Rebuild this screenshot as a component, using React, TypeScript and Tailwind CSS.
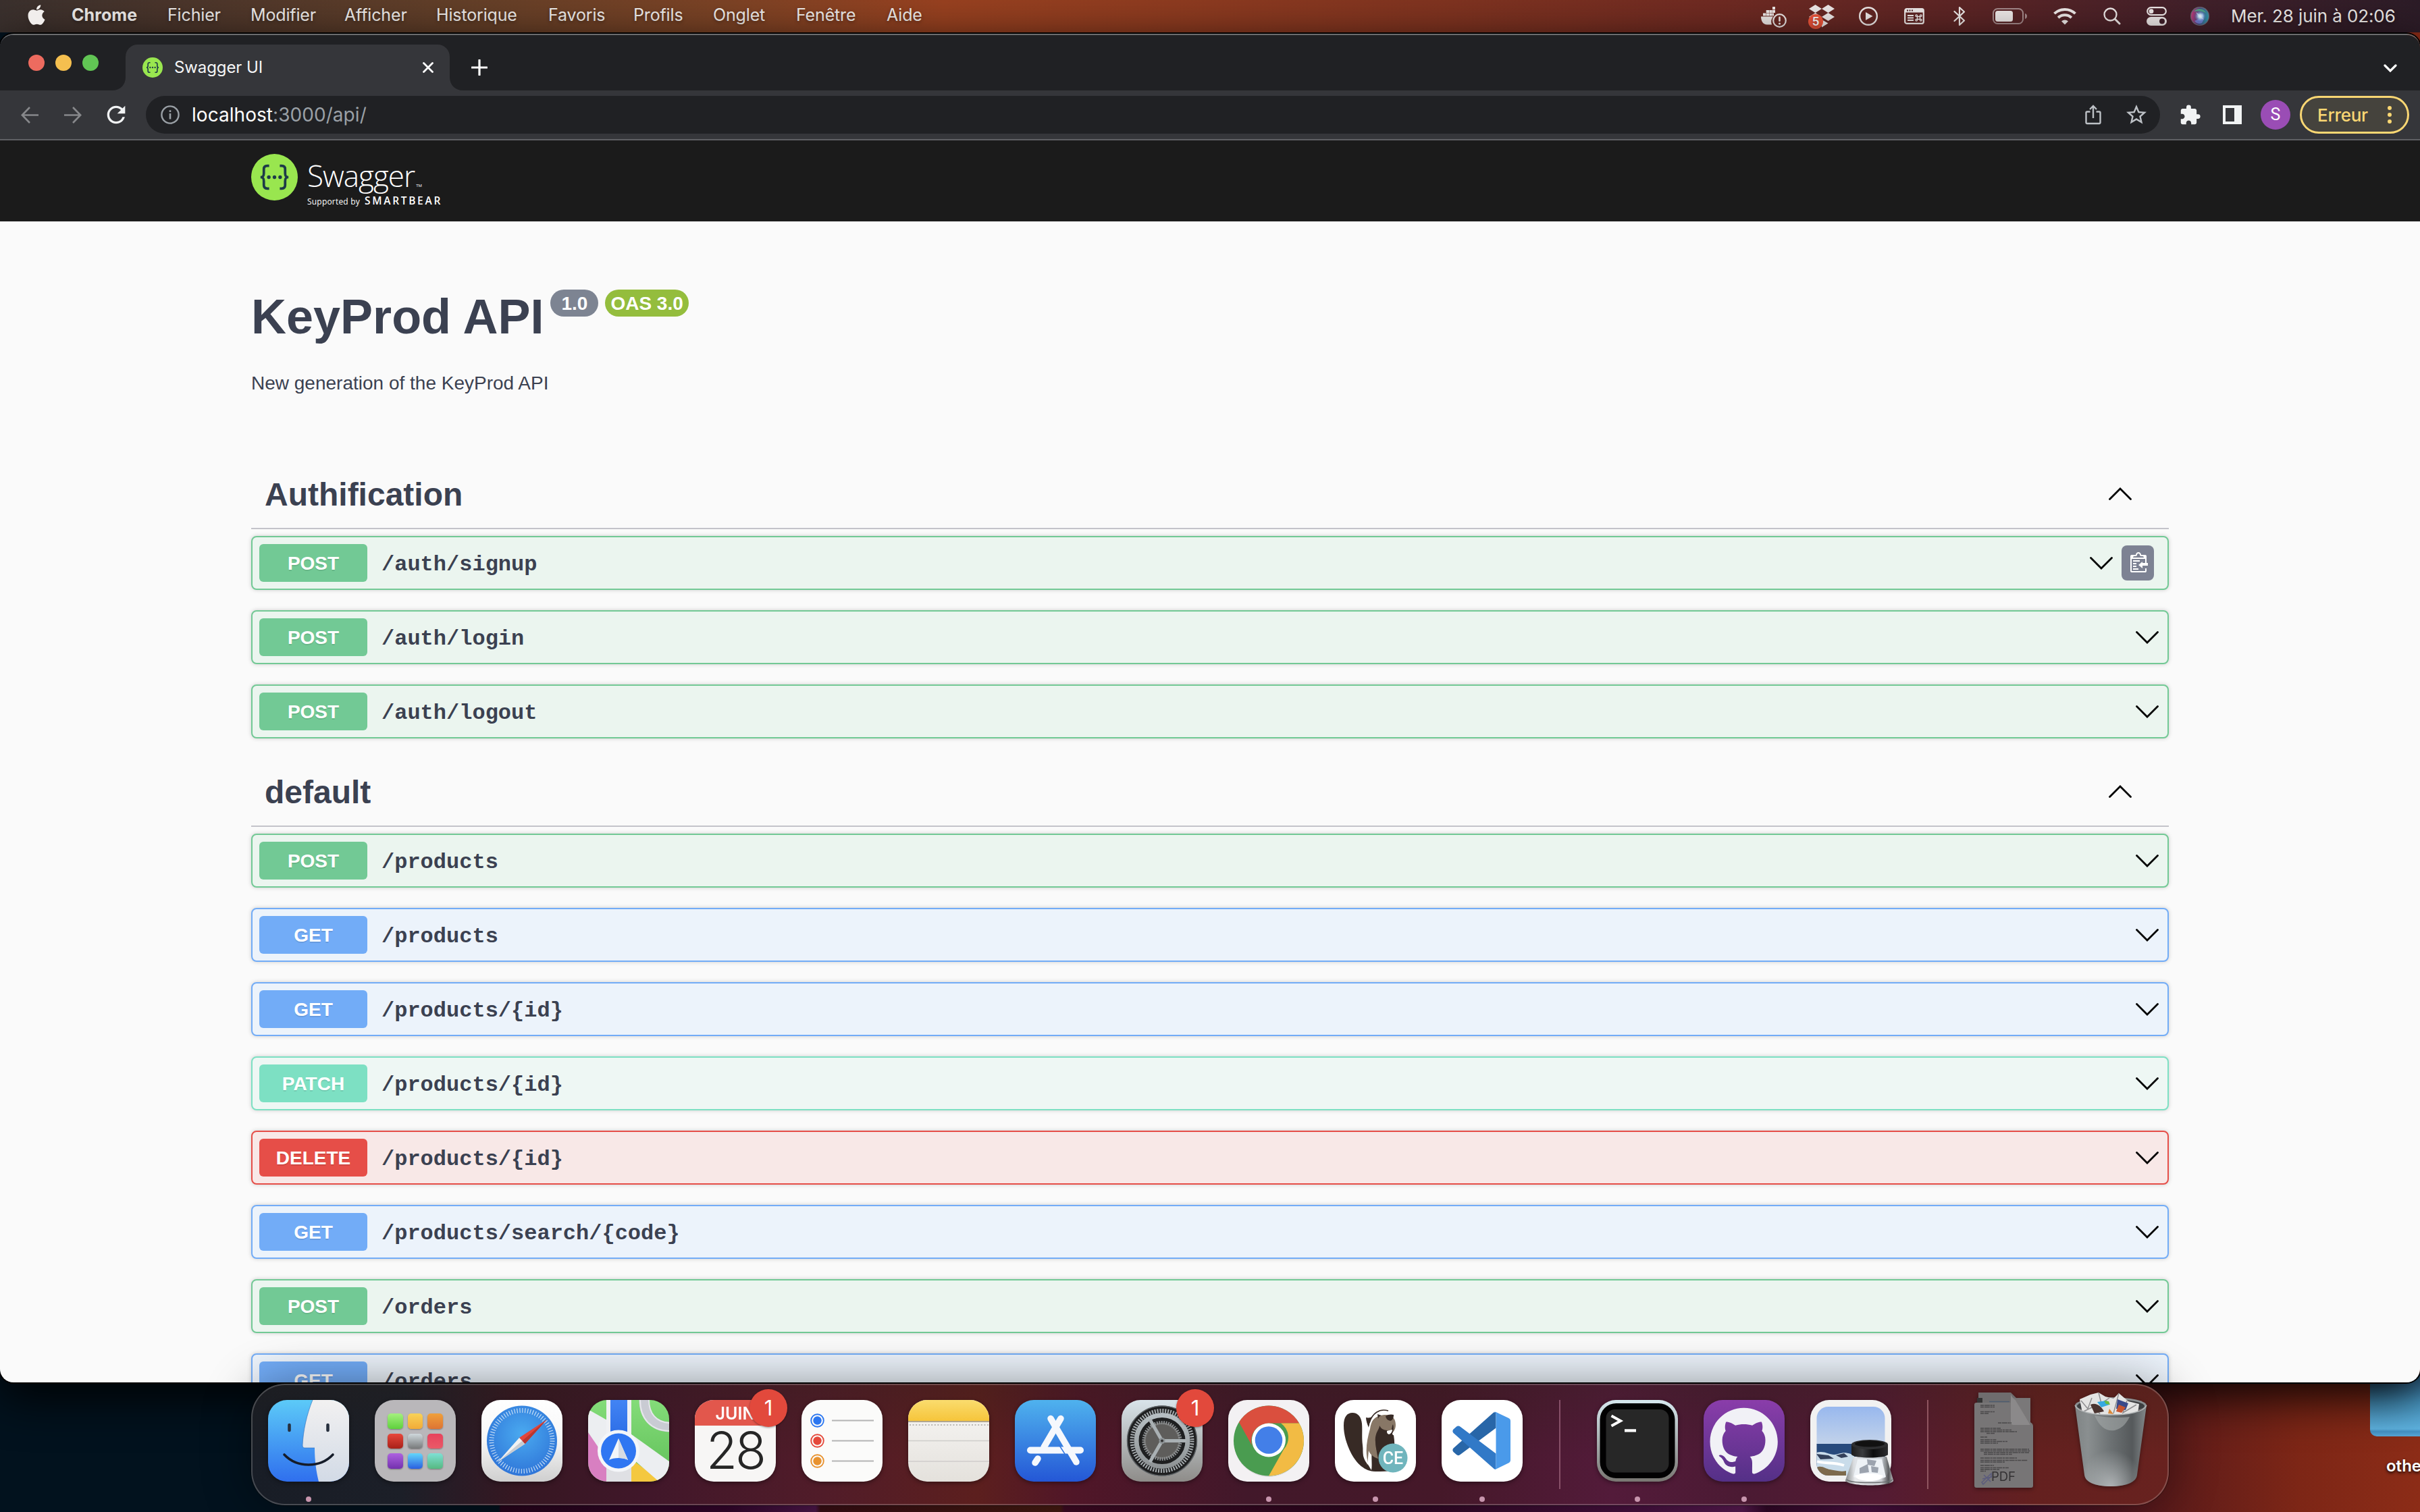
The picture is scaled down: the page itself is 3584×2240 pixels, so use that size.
import React from "react";
import { FaApple } from "react-icons/fa";
import { MdExtension, MdStarBorder, MdRefresh } from "react-icons/md";

/* ---------- menu bar ---------- */

const menus = [
  { label: "Chrome", cls: "w-[142px] font-bold tracking-[0.1px]" },
  { label: "Fichier", cls: "w-[123px]" },
  { label: "Modifier", cls: "w-[139px]" },
  { label: "Afficher", cls: "w-[136px]" },
  { label: "Historique", cls: "w-[166px]" },
  { label: "Favoris", cls: "w-[126px]" },
  { label: "Profils", cls: "w-[118px]" },
  { label: "Onglet", cls: "w-[123px]" },
  { label: "Fenêtre", cls: "w-[134px]" },
  { label: "Aide", cls: "w-[70px]" },
];

function DockerIcon() {
  return (
    <svg className="w-[40px] h-[34px]" viewBox="0 0 40 34" fill="#eee9e8">
      <path d="M1 15.500h18a12 12 0 0 0-2 12H10C4 27.500 1 22 1 15.500z" />
      <path d="M4 10.500h4.300v4H4zM8.700 10.500H13v4H8.700zM13.400 10.500h4.300v4h-4.300zM8.700 6H13v4H8.700zM13.400 6h4.300v4h-4.300zM18 6h4v4h-4zM18 1h4v4.300h-4zM18 10.500h2v4h-2z" />
      <circle cx="28.500" cy="21.500" r="9.300" fill="none" stroke="#eee9e8" strokeWidth="2.200" />
      <rect x="27.200" y="15.500" width="2.600" height="7.500" rx="1.200" />
      <circle cx="28.500" cy="26" r="1.600" />
    </svg>
  );
}

function DropboxIcon() {
  return (
    <svg className="w-[40px] h-[38px]" viewBox="0 0 40 38">
      <g fill="#eee9e8">
        <path d="M10.500 0l9.500 6-9.500 6L1 6zM29.500 0l9.500 6-9.500 6L20 6zM10.500 12l9.500 6-9.500 6L1 18zM29.500 12l9.500 6-9.500 6L20 18zM20 22l9.500 5.500L20 33.500z" />
      </g>
      <circle cx="11" cy="25" r="11" fill="#f0553a" />
      <text x="11" y="31" textAnchor="middle" fontFamily="Inter, sans-serif" fontSize="17" fontWeight="600" fill="#fff">5</text>
    </svg>
  );
}

function PlayIcon() {
  return (
    <svg className="w-[28px] h-[28px]" viewBox="0 0 28 28">
      <circle cx="14" cy="14" r="12.800" fill="none" stroke="#eee9e8" strokeWidth="2.400" />
      <path d="M10 8l10.500 6L10 20z" fill="#eee9e8" />
    </svg>
  );
}

function ShortcutIcon() {
  return (
    <svg className="w-[30px] h-[24px]" viewBox="0 0 30 24">
      <rect x="1.200" y="1.200" width="27.600" height="21.600" rx="2.500" fill="none" stroke="#eee9e8" strokeWidth="2.200" />
      <path d="M1 1h28v5.500H1z" fill="#eee9e8" />
      <path d="M4 3.500h2M7.500 3.500h2M11 3.500h2" stroke="#54272a" strokeWidth="1.800" />
      <path d="M5 11h9M5 14.500h9M5 18h9" stroke="#eee9e8" strokeWidth="1.800" />
      <path d="M19.500 12.500h4v4h-4zM19.500 12.500v-1.300a1.300 1.300 0 1 0-1.300 1.300zM23.500 12.500v-1.300a1.300 1.300 0 1 1 1.300 1.300zM19.500 16.500v1.300a1.300 1.300 0 1 1-1.300-1.300zM23.500 16.500v1.300a1.300 1.300 0 1 0 1.300-1.300z" fill="none" stroke="#eee9e8" strokeWidth="1.300" />
    </svg>
  );
}

function BluetoothIcon() {
  return (
    <svg className="w-[18px] h-[30px]" viewBox="0 0 18 30" fill="none" stroke="#eee9e8" strokeWidth="2.200" strokeLinejoin="round" strokeLinecap="round">
      <path d="M1.500 8L16 21.500 9 28V2l7 6.500L1.500 22" />
    </svg>
  );
}

function BatteryIcon() {
  return (
    <svg className="w-[52px] h-[24px]" viewBox="0 0 52 24">
      <rect x="1" y="1" width="44" height="22" rx="6.500" fill="none" stroke="#a58a8b" strokeWidth="2" />
      <rect x="4" y="4" width="26" height="16" rx="3.500" fill="#eee9e8" />
      <path d="M48 8c2 .6 3 2 3 4s-1 3.400-3 4z" fill="#a58a8b" />
    </svg>
  );
}

function WifiIcon() {
  return (
    <svg className="w-[36px] h-[26px]" viewBox="0 0 36 26" fill="none" stroke="#eee9e8">
      <path d="M2.500 9.200C11 .8 25 .8 33.500 9.200" strokeWidth="4" />
      <path d="M8.200 15.200c5.500-5.200 14-5.200 19.600 0" strokeWidth="4" />
      <path d="M13 20.500c3-2.700 7-2.700 10 0l-5 5z" fill="#eee9e8" stroke="none" />
    </svg>
  );
}

function SearchIcon() {
  return (
    <svg className="w-[26px] h-[26px]" viewBox="0 0 26 26" fill="none" stroke="#eee9e8" strokeLinecap="round">
      <circle cx="10.500" cy="10.500" r="9" strokeWidth="2.300" />
      <path d="M17.300 17.300L24 24" strokeWidth="3" />
    </svg>
  );
}

function ControlIcon() {
  return (
    <svg className="w-[30px] h-[28px]" viewBox="0 0 30 28">
      <rect x="1.200" y="1.200" width="27.600" height="11" rx="5.500" fill="none" stroke="#eee9e8" strokeWidth="2.200" />
      <circle cx="7" cy="6.700" r="3.400" fill="#eee9e8" />
      <rect x="0" y="15" width="30" height="13" rx="6.500" fill="#eee9e8" />
      <circle cx="23" cy="21.500" r="4" fill="#40202a" />
    </svg>
  );
}

function SiriIcon() {
  return (
    <svg className="w-[28px] h-[28px]" viewBox="0 0 28 28">
      <defs>
        <radialGradient id="siriCore">
          <stop offset="0" stopColor="#fff" />
          <stop offset=".35" stopColor="#c8ecff" stopOpacity=".9" />
          <stop offset="1" stopColor="#6a8fe0" stopOpacity="0" />
        </radialGradient>
        <linearGradient id="siriRim" x1="0" y1=".5" x2="1" y2=".6">
          <stop offset="0" stopColor="#c43a78" />
          <stop offset=".45" stopColor="#46467a" />
          <stop offset="1" stopColor="#2f9cae" />
        </linearGradient>
      </defs>
      <circle cx="14" cy="14" r="14" fill="#6e6a7a" />
      <circle cx="14" cy="14" r="12.800" fill="url(#siriRim)" />
      <path d="M5 7c6-6 14-5 18 2-6-3-12-3-18-2z" fill="#52b487" opacity=".8" />
      <path d="M6 21c5-2 10-5 12-12 3 6 2 11-1 15-4 2-8 1-11-3z" fill="#7f8ff0" opacity=".7" />
      <path d="M8 8l7 5 5 6-7-3z" fill="#fff" opacity=".7" />
      <circle cx="14.500" cy="14" r="8.500" fill="url(#siriCore)" />
    </svg>
  );
}

function MenuBar() {
  return (
    <header className="flex h-12 shrink-0 items-center bg-[linear-gradient(90deg,#3a302d_0%,#4a352b_7%,#633f28_19%,#7c4325_30%,#984120_39%,#8c3a20_50%,#7f3320_60%,#6f2a22_71%,#5a2425_82%,#41202a_91%,#2c1c27_100%)] pl-[39px] font-[Inter,sans-serif] text-[25px] text-[#f1eeec] [text-shadow:0_2px_5px_rgba(0,0,0,.35)]">
      <FaApple className="mt-[-5px] mr-[37px] size-[30px] h-[34px] drop-shadow-md" />
      <nav className="flex pb-[2px] tracking-[-0.15px]">
        {menus.map((m) => (
          <span key={m.label} className={m.cls}>{m.label}</span>
        ))}
      </nav>
      <div className="ml-auto flex items-center pr-[36px]">
        <div className="mt-[3px] mr-[31px]"><DockerIcon /></div>
        <div className="mt-[4px] mr-[35px]"><DropboxIcon /></div>
        <div className="mr-[39px]"><PlayIcon /></div>
        <div className="mr-[43px]"><ShortcutIcon /></div>
        <div className="mr-[40px]"><BluetoothIcon /></div>
        <div className="mr-[37px]"><BatteryIcon /></div>
        <div className="mr-[39px]"><WifiIcon /></div>
        <div className="mr-[38px]"><SearchIcon /></div>
        <div className="mr-[35px]"><ControlIcon /></div>
        <div className="mr-[32px]"><SiriIcon /></div>
        <span className="w-[244px] pb-[2px] text-[26px] whitespace-nowrap tracking-[-0.1px]">Mer. 28 juin à 02:06</span>
      </div>
    </header>
  );
}

/* ---------- browser chrome ---------- */

function SwaggerMark({ className }: { className: string }) {
  return (
    <svg className={className} viewBox="0 0 70 70">
      <circle cx="35" cy="35" r="35" fill="#99e64f" />
      <g fill="none" stroke="#1d3b48" strokeWidth="3.800">
        <path d="M27 18h-3c-4 0-5 2-5 5v6c0 4-1 6-5 6 4 0 5 2 5 6v6c0 3 1 5 5 5h3" />
        <path d="M43 18h3c4 0 5 2 5 5v6c0 4 1 6 5 6-4 0-5 2-5 6v6c0 3-1 5-5 5h-3" />
      </g>
      <g fill="#1d3b48">
        <circle cx="26.500" cy="35" r="2.700" />
        <circle cx="35" cy="35" r="2.700" />
        <circle cx="43.500" cy="35" r="2.700" />
      </g>
    </svg>
  );
}

function TabStrip() {
  return (
    <div className="flex h-[82px] items-end bg-[#202124]">
      <div className="mb-[29px] ml-[42px] flex gap-4">
        <i className="size-6 rounded-full bg-[#ed6b5f]" />
        <i className="size-6 rounded-full bg-[#f5bf4f]" />
        <i className="size-6 rounded-full bg-[#61c554]" />
      </div>
      <svg className="ml-[20px] size-5" viewBox="0 0 20 20"><path d="M20 0v20H0C12 20 20 12 20 0z" fill="#35363a" /></svg>
      <div className="flex h-[68px] w-[480px] items-center rounded-t-[18px] bg-[#35363a] pr-[24px] pl-[25px]">
        <SwaggerMark className="size-[30px]" />
        <span className="ml-[17px] font-[Inter,sans-serif] text-[24px] tracking-[-0.1px] text-[#f4f5f6]">Swagger UI</span>
        <svg className="ml-auto size-4" viewBox="0 0 16 16"><path d="M1.500 1.500l13 13M14.500 1.500l-13 13" stroke="#fff" strokeWidth="2.800" strokeLinecap="round" /></svg>
      </div>
      <svg className="size-5" viewBox="0 0 20 20"><path d="M0 0v20h20C8 20 0 12 0 0z" fill="#35363a" /></svg>
      <svg className="mb-[22px] ml-[12px] size-6" viewBox="0 0 24 24"><path d="M12 1v22M1 12h22" stroke="#fff" strokeWidth="3.200" strokeLinecap="round" /></svg>
      <svg className="mr-[34px] mb-[27px] ml-auto h-[12px] w-[20px]" viewBox="0 0 20 12"><path d="M2 2l8 8 8-8" fill="none" stroke="#fff" strokeWidth="3.200" strokeLinecap="round" /></svg>
    </div>
  );
}

function Toolbar() {
  return (
    <div className="flex h-[74px] items-center border-b-2 border-[#5f6064] bg-[#35363a] pr-[16px] pl-[31px]">
      <svg className="h-[25px] w-[26px]" viewBox="0 0 26 25"><path d="M26 12.500H2M13 1L1.800 12.500 13 24" fill="none" stroke="#87888b" strokeWidth="2.600" /></svg>
      <svg className="ml-[38px] h-[25px] w-[26px]" viewBox="0 0 26 25"><path d="M0 12.500h24M13 1l11.200 11.500L13 24" fill="none" stroke="#87888b" strokeWidth="2.600" /></svg>
      <MdRefresh className="ml-[31px] size-[40px] text-[#f1f3f4]" />
      <div className="mr-[28px] ml-[24px] flex h-14 flex-1 items-center rounded-full bg-[#202124] pr-[17px] pl-[22px]">
        <svg className="size-7" viewBox="0 0 28 28"><circle cx="14" cy="14" r="12.600" fill="none" stroke="#9aa0a6" strokeWidth="2.400" /><path d="M14 12v8.500M14 7.200v2.800" stroke="#9aa0a6" strokeWidth="2.600" /></svg>
        <span className="ml-[18px] font-[Inter,sans-serif] text-[28px] leading-8 tracking-[0.050px] text-[#9aa0a6]"><span className="text-white">localhost</span>:3000/api/</span>
        <svg className="mr-[34px] ml-auto h-[30px] w-[24px]" viewBox="0 0 24 30"><path d="M7.500 10.500H3A1.500 1.500 0 0 0 1.500 12v14.500A1.500 1.500 0 0 0 3 28h18a1.500 1.500 0 0 0 1.500-1.500V12a1.500 1.500 0 0 0-1.500-1.500h-4.500M12 20V2.500M7 7l5-5 5 5" fill="none" stroke="#bdc1c6" strokeWidth="2.400" /></svg>
        <MdStarBorder className="size-[36px] text-[#bdc1c6]" />
      </div>
      <MdExtension className="size-[33px] text-[#f1f3f4]" />
      <svg className="ml-[32px] size-7" viewBox="0 0 28 28"><path d="M0 0h28v28H0zM4 4v20h13V4z" fill="#f1f3f4" fillRule="evenodd" /></svg>
      <span className="ml-[28px] flex size-11 items-center justify-center rounded-full bg-[#9a4db5] font-[Roboto,sans-serif] text-[25px] text-white">S</span>
      <div className="ml-[14px] flex h-14 w-[162px] items-center rounded-full border-[3px] border-[#fad773] bg-[#45433d] pl-[23px]">
        <span className="font-[Inter,sans-serif] text-[26px] font-medium tracking-[-0.3px] text-[#fad773]">Erreur</span>
        <span className="ml-[29px] flex flex-col gap-[4px]">
          <i className="size-[6px] rounded-full bg-[#fad773]" />
          <i className="size-[6px] rounded-full bg-[#fad773]" />
          <i className="size-[6px] rounded-full bg-[#fad773]" />
        </span>
      </div>
    </div>
  );
}

/* ---------- API documentation page ---------- */

type Verb = "POST" | "GET" | "PATCH" | "DELETE";

const tones: Record<Verb, { row: string; pill: string }> = {
  POST: { row: "border-[#72c995] bg-[#ebf5ef]", pill: "bg-[#72c995]" },
  GET: { row: "border-[#72acf7] bg-[#ecf3fb]", pill: "bg-[#72acf7]" },
  PATCH: { row: "border-[#7de0c3] bg-[#eef7f4]", pill: "bg-[#7de0c3]" },
  DELETE: { row: "border-[#e64e48] bg-[#f8e8e7]", pill: "bg-[#e64e48]" },
};

function Chevron({ up = false }: { up?: boolean }) {
  return (
    <svg className="h-[19px] w-[34px]" viewBox="0 0 34 19">
      <path d={up ? "M1.500 17.500L17 2l15.500 15.500" : "M1.500 1.500L17 17 32.500 1.500"} fill="none" stroke="#000" strokeWidth="2.800" strokeLinecap="round" />
    </svg>
  );
}

function Operation({ verb, path, copy = false }: { verb: Verb; path: string; copy?: boolean }) {
  const tone = tones[verb];
  return (
    <div className={`mb-[30px] flex h-20 items-center rounded-[8px] border-2 px-[10px] shadow-[0_0_6px_rgba(0,0,0,.19)] ${tone.row}`}>
      <span className={`flex h-14 w-40 items-center justify-center rounded-[6px] pt-px text-[28px] font-bold text-white [text-shadow:0_2px_0_rgba(0,0,0,.1)] ${tone.pill}`}>{verb}</span>
      <span className="ml-[21px] flex-1 pt-[6px] font-['Liberation_Mono',monospace] text-[32px] font-bold text-[#3b4151]">{path}</span>
      {copy ? (
        <>
          <span className="mt-px"><Chevron /></span>
          <span className="mr-[10px] ml-[13px] flex h-[52px] w-12 items-center justify-center rounded-[8px] bg-[#7d8293]">
            <svg width="30" height="32" viewBox="0 0 15 16"><g transform="translate(2,-1)"><path fill="#fff" fillRule="evenodd" d="M2 13h4v1H2v-1zm5-6H2v1h5V7zm2 3V8l-3 2.500L9 13v-2h5v-2H9zM4.500 9H2v1h2.500V9zM2 12h2.500v-1H2v1zm9 1h1v2c-.02.28-.11.52-.3.700-.19.180-.42.280-.7.300H1c-.55 0-1-.45-1-1V4c0-.55.450-1 1-1h3c0-1.110.890-2 2-2 1.110 0 2 .89 2 2h3c.55 0 1 .45 1 1v5h-1V6H1v9h10v-2zM2 5h8c0-.55-.45-1-1-1H8c-.55 0-1-.45-1-1s-.45-1-1-1-1 .45-1 1-.45 1-1 1H3c-.55 0-1 .45-1 1z" /></g></svg>
          </span>
        </>
      ) : (
        <span className="mt-px mr-[3px]"><Chevron /></span>
      )}
    </div>
  );
}

function TagSection({ title, children }: { title: string; children: React.ReactNode }) {
  return (
    <section className="pb-px">
      <h2 className="mb-[10px] flex h-[100px] items-center border-b-2 border-[#c3c3ca] pt-[6px] pr-[55px] pb-[8px] pl-5 text-[48px] font-bold text-[#3b4151]">
        <span className="flex-1 pt-[2px]">{title}</span>
        <span className="mb-[2px]"><Chevron up /></span>
      </h2>
      {children}
    </section>
  );
}

function SwaggerPage() {
  return (
    <div className="flex-1 overflow-hidden bg-[#fafafa] font-['Liberation_Sans',sans-serif]">
      <div className="h-[120px] bg-[#1b1b1b]">
        <div className="flex px-[372px] pt-5">
          <SwaggerMark className="size-[69px]" />
          <div className="ml-[14px] text-white font-['Open_Sans',sans-serif]">
            <div className="flex h-[61px] items-end">
              <span className="text-[44px] leading-[58px] font-light tracking-[-1px]">Swagger</span>
              <span className="pb-[10px] pl-[2px] text-[6px] leading-[8px]">TM</span>
            </div>
            <div className="flex items-baseline text-[12px] leading-[16px]">
              <span className="w-[85px] tracking-[0.2px] whitespace-nowrap">Supported by</span>
              <span className="text-[15.500px] font-semibold tracking-[2.700px]">SMARTBEAR</span>
            </div>
          </div>
        </div>
      </div>
      <main className="px-[372px]">
        <div className="flex items-start pt-[100px] text-[#3b4151]">
          <h1 className="text-[72px] leading-[83px] font-bold">KeyProd API</h1>
          <span className="mt-[1px] ml-[10px] flex h-10 items-center rounded-full bg-[#7d8492] px-4 pt-px text-[28px] font-bold text-white">1.0</span>
          <span className="mt-[1px] ml-[10px] flex h-10 items-center rounded-full bg-[#94bd3d] px-2 pt-px text-[28px] font-bold text-white">OAS 3.0</span>
        </div>
        <p className="mt-[41px] h-[132px] text-[28px] leading-[32px] text-[#3b4151]">New generation of the KeyProd API</p>
        <TagSection title="Authification">
          <Operation verb="POST" path="/auth/signup" copy />
          <Operation verb="POST" path="/auth/login" />
          <Operation verb="POST" path="/auth/logout" />
        </TagSection>
        <TagSection title="default">
          <Operation verb="POST" path="/products" />
          <Operation verb="GET" path="/products" />
          <Operation verb="GET" path="/products/{id}" />
          <Operation verb="PATCH" path="/products/{id}" />
          <Operation verb="DELETE" path="/products/{id}" />
          <Operation verb="GET" path="/products/search/{code}" />
          <Operation verb="POST" path="/orders" />
          <Operation verb="GET" path="/orders" />
        </TagSection>
      </main>
    </div>
  );
}

/* ---------- dock ---------- */

function Tile({ children, running = false, badge }: { children: React.ReactNode; running?: boolean; badge?: string }) {
  return (
    <div className="relative h-[154px] w-[120px] shrink-0">
      <div className="h-[121px] drop-shadow-[0_2px_3px_rgba(0,0,0,.4)]">{children}</div>
      {running && <i className="mx-auto mt-[22px] block size-2 rounded-full bg-[#c795ad]" />}
      {badge && (
        <span className="absolute top-[-16px] left-[81px] flex size-14 items-center justify-center rounded-full bg-[#e2493c] font-[Inter,sans-serif] text-[31px] text-white shadow-[0_1px_3px_rgba(0,0,0,.4)]">{badge}</span>
      )}
    </div>
  );
}

const app = "block h-[121px] w-[120px] rounded-[28px]";

function Finder() {
  return (
    <svg className={app} viewBox="0 0 120 121">
      <defs>
        <linearGradient id="fb" x1="0" y1="0" x2="0" y2="1"><stop offset="0" stopColor="#5ccaf8" /><stop offset="1" stopColor="#2f6fee" /></linearGradient>
        <linearGradient id="fw" x1="0" y1="0" x2="0" y2="1"><stop offset="0" stopColor="#f2f1f1" /><stop offset="1" stopColor="#d2dae6" /></linearGradient>
      </defs>
      <path d="M0 0h120v121H0z" fill="url(#fb)" />
      <path d="M66 0C57 22 52 46 51 67c0 2 1 4 3 4h15c0 18 2 34 6 50h45V0z" fill="url(#fw)" />
      <path d="M66 0C57 22 52 46 51 67c0 2 1 4 3 4h15" fill="none" stroke="#2f6db8" strokeWidth="1" opacity=".6" />
      <path d="M31.500 37v8M88.500 37v8" stroke="#27303e" strokeWidth="4.600" strokeLinecap="round" />
      <path d="M24 81c19 20 53 20 72 0" fill="none" stroke="#151c29" strokeWidth="3.600" strokeLinecap="round" />
    </svg>
  );
}

const pads = [
  ["#a4f07e", "#5fd13d"], ["#f8d257", "#f2ab38"], ["#f0a03a", "#dd7434"],
  ["#e8473b", "#a82018"], ["#cfd8dc", "#787a7b"], ["#e8425c", "#e95a68"],
  ["#ae62e0", "#7331ae"], ["#62d6fb", "#2a5fe0"], ["#7fe0d5", "#56b981"],
];

function Launchpad() {
  return (
    <div className={`${app} bg-[#b9b7ba] pt-[20px] pl-[19px]`}>
      <div className="grid w-[82px] grid-cols-3 gap-x-[7px] gap-y-[7px]">
        {pads.map(([a, b]) => (
          <i key={a} className="size-[22.500px] rounded-[5px] shadow-[0_1px_2px_rgba(0,0,0,.35)]" style={{ background: `linear-gradient(${a}, ${b})` }} />
        ))}
      </div>
    </div>
  );
}

function Safari() {
  return (
    <svg className={app} viewBox="0 0 120 121">
      <defs>
        <linearGradient id="sf" x1="0" y1="0" x2="0" y2="1"><stop offset="0" stopColor="#fff" /><stop offset=".5" stopColor="#f6f6f6" /><stop offset="1" stopColor="#cfcfcf" /></linearGradient>
        <radialGradient id="sb" cx=".5" cy=".4" r=".6"><stop offset="0" stopColor="#4aaaf0" /><stop offset="1" stopColor="#2f75d8" /></radialGradient>
      </defs>
      <path d="M0 0h120v121H0z" fill="url(#sf)" />
      <circle cx="60" cy="60.500" r="52" fill="url(#sb)" />
      <circle cx="60" cy="60.500" r="45" fill="none" stroke="#e9f3fc" strokeWidth="7" strokeDasharray="1.100 2.827" opacity=".85" />
      <path d="M97 29L56 56l8.500 9z" fill="#e2453a" />
      <path d="M24 92l32-36 8.500 9z" fill="#f2f2f2" />
      <path d="M24 92l40.500-27-4-4.500z" fill="#c9ccd1" />
      <path d="M97 29L64.500 65l-4-4.500z" fill="#b8362f" />
    </svg>
  );
}

function Maps() {
  return (
    <svg className={app} viewBox="0 0 120 121">
      <defs>
        <linearGradient id="mg" x1="0" y1="0" x2="0" y2="1"><stop offset="0" stopColor="#84dc79" /><stop offset="1" stopColor="#5fbf58" /></linearGradient>
        <linearGradient id="mr" x1="0" y1="0" x2="0" y2="1"><stop offset="0" stopColor="#4284f4" /><stop offset="1" stopColor="#2464e0" /></linearGradient>
      </defs>
      <path d="M0 0h120v121H0z" fill="url(#mg)" />
      <path d="M0 48l30 40v33H0z" fill="#d87fc1" />
      <path d="M60 85l50 36H60z" fill="#f4c83f" />
      <path d="M0 14l30 17v61L0 48z" fill="#eceef1" />
      <path d="M60 48l60 43v30h-15L60 82z" fill="#eceef1" />
      <path d="M27 0h37v121H27z" fill="#f0f1f4" />
      <path d="M27 85h37v36H27z" fill="#dfe0e4" />
      <path d="M33 0h25v75H33z" fill="url(#mr)" />
      <path d="M83 0c0 24 14 39 37 40" fill="none" stroke="#c9cbd3" strokeWidth="15" />
      <path d="M77 0c0 28 16 45 43 46M90 0c0 20 11 33 30 34" fill="none" stroke="#e6e7eb" strokeWidth="2" />
      <circle cx="45" cy="75.500" r="31" fill="#f4f6f9" />
      <circle cx="45" cy="75.500" r="26" fill="#2f76f2" />
      <path d="M45 57l14 32c-6-4-22-4-28 0z" fill="#f4f6f9" />
      <path d="M45 57l14 32c-3-2-9-3-14-3z" fill="#d7dbe2" />
    </svg>
  );
}

function Calendar() {
  return (
    <svg className={app} viewBox="0 0 120 121">
      <path d="M0 0h120v121H0z" fill="#f7f6f5" />
      <path d="M0 0h120v38H0z" fill="#e2574c" />
      <text x="60" y="29" textAnchor="middle" fontFamily="Inter, sans-serif" fontSize="25" fontWeight="600" fill="#fff">JUIN</text>
      <text x="60" y="102" textAnchor="middle" fontFamily="Inter, sans-serif" fontSize="75" fontWeight="300" letterSpacing="-3" fill="#262626">28</text>
    </svg>
  );
}

function Reminders() {
  return (
    <svg className={app} viewBox="0 0 120 121">
      <path d="M0 0h120v121H0z" fill="#fbfbfa" />
      {[["#2b76f0", 30.5], ["#e5493b", 60.5], ["#e8922f", 90.5]].map(([c, y]) => (
        <g key={c as string}>
          <circle cx="23.500" cy={y} r="9.300" fill="none" stroke={c as string} strokeWidth="1.900" />
          <circle cx="23.500" cy={y} r="6.200" fill={c as string} />
          <path d={`M45 ${y}h62`} stroke="#b4b4b4" strokeWidth="2.200" />
        </g>
      ))}
    </svg>
  );
}

function Notes() {
  return (
    <svg className={app} viewBox="0 0 120 121">
      <defs>
        <linearGradient id="ny" x1="0" y1="0" x2="0" y2="1"><stop offset="0" stopColor="#fadc6e" /><stop offset="1" stopColor="#f6c53b" /></linearGradient>
        <linearGradient id="nw" x1="0" y1="0" x2="0" y2="1"><stop offset="0" stopColor="#f8f7f5" /><stop offset="1" stopColor="#e4e1dc" /></linearGradient>
      </defs>
      <path d="M0 0h120v121H0z" fill="url(#nw)" />
      <path d="M0 0h120v31H0z" fill="url(#ny)" />
      <path d="M0 32h120" stroke="#b0a58d" strokeWidth="2" />
      <path d="M2 37h118" stroke="#b9b7b3" strokeWidth="2" strokeDasharray="2 2.600" />
      <path d="M0 60.500h120M0 91h120" stroke="#cfcdcb" strokeWidth="1.600" />
    </svg>
  );
}

function AppStore() {
  return (
    <svg className={app} viewBox="0 0 120 121">
      <defs><linearGradient id="as" x1="0" y1="0" x2="0" y2="1"><stop offset="0" stopColor="#4fb2ee" /><stop offset="1" stopColor="#2457d6" /></linearGradient></defs>
      <path d="M0 0h120v121H0z" fill="url(#as)" />
      <g fill="none" stroke="#f5f8fd" strokeLinecap="round">
        <path d="M53 27.500L91 92" strokeWidth="9.500" />
        <path d="M68 27.500L43 70" strokeWidth="9.500" />
        <path d="M23 74.500h74" strokeWidth="10" />
        <path d="M34 87l-4 6" strokeWidth="9.500" />
      </g>
      <path d="M65 66l11 17" stroke="#3578e0" strokeWidth="1.500" />
    </svg>
  );
}

function Settings() {
  return (
    <svg className={app} viewBox="0 0 120 121">
      <defs>
        <linearGradient id="sg" x1="0" y1="0" x2="0" y2="1"><stop offset="0" stopColor="#d9e4ea" /><stop offset="1" stopColor="#8e8c89" /></linearGradient>
        <linearGradient id="sm" x1="0" y1="0" x2="0" y2="1"><stop offset="0" stopColor="#b6bec2" /><stop offset="1" stopColor="#8f9496" /></linearGradient>
      </defs>
      <path d="M0 0h120v121H0z" fill="url(#sg)" />
      <circle cx="60" cy="60.500" r="52" fill="#1e1f20" />
      <circle cx="60" cy="60.500" r="51.500" fill="none" stroke="#5f6467" strokeWidth="1.500" />
      <circle cx="60" cy="60.500" r="44.500" fill="none" stroke="#a7adb0" strokeWidth="6" strokeDasharray="2 1.884" />
      <circle cx="60" cy="60.500" r="38" fill="none" stroke="url(#sm)" strokeWidth="7" />
      <circle cx="60" cy="60.500" r="27" fill="#696866" stroke="#8e9294" strokeWidth="5" strokeDasharray="1.800 1.593" />
      <circle cx="60" cy="60.500" r="24" fill="#5e5d5b" />
      <g stroke="#a9b0b3" strokeWidth="5">
        <path d="M60 60.500h36M60 60.500L42 29M60 60.500L42 92" />
      </g>
      <circle cx="60" cy="60.500" r="4.500" fill="#8d9396" />
      <circle cx="60" cy="60.500" r="2" fill="#333" />
    </svg>
  );
}

function ChromeApp() {
  return (
    <svg className={app} viewBox="0 0 120 121">
      <path d="M0 0h120v121H0z" fill="#f3f1f3" />
      <circle cx="60" cy="63" r="51" fill="#000" opacity=".09" />
      <circle cx="60" cy="60.500" r="52" fill="#4a9c50" />
      <path d="M60 8.500A52 52 0 0 1 105 34.500H60a26 26 0 0 0-25 33L16 33A52 52 0 0 1 60 8.500z" fill="#da4f3e" />
      <path d="M105 34.500A52 52 0 0 1 60 112.500l22-39a26 26 0 0 0-4-39z" fill="#f2bb44" />
      <circle cx="60" cy="59.500" r="25" fill="#fff" />
      <circle cx="60" cy="59.500" r="20.300" fill="#437fe8" />
    </svg>
  );
}

function DBeaver() {
  return (
    <svg className={app} viewBox="0 0 120 121">
      <path d="M0 0h120v121H0z" fill="#fff" />
      <path d="M13 38c0-13 5-19 13-19s13 6 14 16c1 12-1 24 2 38 2 12 6 22 12 31 2-10-2-24 3-44l30-8c2 12 2 40 2 52-10 2-20 2-29 2-16 0-28-12-36-27-7-14-11-28-11-41z" fill="#372a25" />
      <path d="M46 26c4 1 7 0 9-1l-5 16c-2-5-4-10-4-15z" fill="#372a25" />
      <path d="M50 44c3-16 13-22 26-22 9 0 14 6 14 15 0 7-4 12-9 15l-15-3c-6 10-6 22-2 38-6-2-12-6-14-12l-2 22c-6-18-6-36 2-53z" fill="#887766" />
      <path d="M66 38c0 6-7 10-6 24 0 12 4 18 8 26l20-10c-1-10 1-20-3-28z" fill="#372a25" />
      <path d="M66 37c1 5 6 8 12 8 6-2 9-6 10-13l-14-6z" fill="#887766" />
      <path d="M52 43c2-15 12-27 27-28-10-4-26 5-28 22-3 12-12 24-9 46 2 7 5 11 8 14-6-20-3-36 2-54z" fill="#fff" />
      <path d="M51 34c4-14 15-22 28-18" fill="none" stroke="#372a25" strokeWidth="1.600" />
      <path d="M63 21l6 2c-3 1-4 2-5 5zM75 24c4-3 9-3 12-2 0 4-1 8-5 9-4-1-6-3-7-7zM86 36c2 7 0 14-4 18l3-16z" fill="#372a25" />
      <path d="M77 46l8-2c0 3-2 6-5 7-3-1-3-3-3-5z" fill="#fff" />
      <circle cx="86" cy="86" r="21.500" fill="#70b5bd" />
      <text x="86" y="95" textAnchor="middle" fontFamily="Roboto, sans-serif" fontSize="25" fontWeight="500" fill="#fff">CE</text>
    </svg>
  );
}

function VSCode() {
  return (
    <svg className={app} viewBox="0 0 120 121">
      <path d="M0 0h120v121H0z" fill="#fff" />
      <path d="M77 18.500L17.500 71.500c-1.500 1.500-1.500 4 0 5.500l4.500 4c1.500 1.500 4 1.500 5.500 0L80.500 41.500V18z" fill="#2866a8" />
      <path d="M77 101.500L17.500 49c-1.500-1.500-1.500-4 0-5.500l4.500-4c1.500-1.500 4-1.500 5.500 0l53 40V102c-1 1-2.500.5-3.500-.5z" fill="#3179c7" />
      <path d="M80.500 18l19 9c1.500.8 2.500 2 2.500 4v58c0 2-1 3.400-2.500 4.200l-19 9.300c-1 .5-2 .3-3 0 2 0 3-1 3-3V21c0-2-1-3-3-3 1-.3 2-.3 3 0z" fill="#4a9aea" />
    </svg>
  );
}

function Terminal() {
  return (
    <svg className={app} viewBox="0 0 120 121">
      <defs><linearGradient id="tg" x1="0" y1="0" x2="0" y2="1"><stop offset="0" stopColor="#d6e7ee" /><stop offset="1" stopColor="#797672" /></linearGradient></defs>
      <path d="M0 0h120v121H0z" fill="url(#tg)" />
      <rect x="4.500" y="5" width="111" height="111" rx="24" fill="#020102" />
      <rect x="13.500" y="14" width="93" height="93.500" rx="13" fill="#272727" />
      <path d="M21.500 23.500L35 31l-13.500 7.500" fill="none" stroke="#fff" strokeWidth="4" />
      <path d="M41 45.300h17" stroke="#fff" strokeWidth="4.300" />
    </svg>
  );
}

function GitHubDesktop() {
  return (
    <svg className={app} viewBox="0 0 120 121">
      <defs><linearGradient id="gh" x1="0" y1="0" x2="0" y2="1"><stop offset="0" stopColor="#8a3daa" /><stop offset="1" stopColor="#543087" /></linearGradient></defs>
      <path d="M0 0h120v121H0z" fill="url(#gh)" />
      <path transform="translate(9.500 10.500) scale(4.180)" fill="#f1f1f6" d="M12 .297c-6.630 0-12 5.373-12 12 0 5.303 3.438 9.800 8.205 11.385.6.113.820-.258.820-.577 0-.285-.01-1.040-.015-2.040-3.338.724-4.042-1.610-4.042-1.610C4.422 18.070 3.633 17.700 3.633 17.700c-1.087-.744.084-.729.084-.729 1.205.084 1.838 1.236 1.838 1.236 1.070 1.835 2.809 1.305 3.495.998.108-.776.417-1.305.760-1.605-2.665-.3-5.466-1.332-5.466-5.930 0-1.310.465-2.380 1.235-3.220-.135-.303-.54-1.523.105-3.176 0 0 1.005-.322 3.300 1.230.960-.267 1.980-.399 3-.405 1.020.006 2.040.138 3 .405 2.280-1.552 3.285-1.230 3.285-1.230.645 1.653.240 2.873.120 3.176.765.840 1.230 1.910 1.230 3.220 0 4.610-2.805 5.625-5.475 5.920.420.360.810 1.096.810 2.220 0 1.606-.015 2.896-.015 3.286 0 .315.210.690.825.570C20.565 22.092 24 17.592 24 12.297c0-6.627-5.373-12-12-12" />
    </svg>
  );
}

function Preview() {
  return (
    <svg className="block h-[121px] w-[120px] overflow-visible" viewBox="0 0 120 121">
      <defs>
        <linearGradient id="pv" x1="0" y1="0" x2="0" y2="1"><stop offset="0" stopColor="#98b8ee" /><stop offset="1" stopColor="#c3d3ea" /></linearGradient>
        <linearGradient id="pc" x1="0" x2="1" y1="0" y2="0"><stop offset="0" stopColor="#1c1c1c" /><stop offset=".3" stopColor="#3b3c3e" /><stop offset=".6" stopColor="#0d0d0d" /><stop offset="1" stopColor="#2b2c2e" /></linearGradient>
        <linearGradient id="pj" x1="0" x2="1" y1="0" y2="0"><stop offset="0" stopColor="#7f8284" /><stop offset=".2" stopColor="#e8eaec" /><stop offset=".75" stopColor="#d5d9dc" /><stop offset=".9" stopColor="#55585a" /><stop offset="1" stopColor="#c8cbcd" /></linearGradient>
        <clipPath id="pclip"><rect x="9.500" y="10" width="101" height="102" rx="17" /></clipPath>
      </defs>
      <rect width="120" height="121" rx="28" fill="#f1f1f1" />
      <g clipPath="url(#pclip)">
        <path d="M9 10h102v56H9z" fill="url(#pv)" />
        <path d="M9 65h102v48H9z" fill="#284a7c" />
        <path d="M9 78c14-4 20 6 32 2s18 0 24 2v31H9z" fill="#c9dcea" />
        <path d="M9 80l18 2 8 5-20 1zM38 82l12-3 6 5-10 2z" fill="#33405a" />
        <path d="M9 100c8-4 14 2 20 3s16 4 24 2v8H9z" fill="#7d6a4c" />
        <path d="M10 91c10 4 24 0 40 6" stroke="#fff" strokeWidth="4" fill="none" />
      </g>
      <path d="M64 84h49l10 35c1 4-14 7.500-34 7.500S51 123 52 119z" fill="url(#pj)" opacity=".95" />
      <path d="M70 88h36l6 26c-10 5-38 5-48 0z" fill="#eef2f6" />
      <path d="M84 88l14 2-3 8-10-2zM73 101l12-6 2 12-14 2zM90 98l11 2-1 8-9-1z" fill="#9ca3ae" />
      <path d="M66 112c12-4 30-4 42 0-2 6-10 8-20 8s-20-2-22-8z" fill="#fff" />
      <path d="M54 118c6 6 62 6 68 0" fill="none" stroke="#6b6e70" strokeWidth="1.500" />
      <path d="M61 66v15c4 6 50 6 54 0V66z" fill="url(#pc)" />
      <ellipse cx="88" cy="66" rx="27" ry="7" fill="#2e2f31" />
      <ellipse cx="88" cy="65" rx="22" ry="4.500" fill="#111" />
    </svg>
  );
}

function PdfStack() {
  return (
    <svg className="mt-[-11px] ml-[15px] h-[142px] w-[88px]" viewBox="0 0 88 142">
      <path d="M6 0h48l8 8h20v40H6z" fill="#6f6d6e" />
      <path d="M4 8h8v10H4z" fill="#333" />
      <path d="M0 18q0-3 3-3h51V8h29v36q4 2 4 6v88q0 3-3 3H3q-3 0-3-3z" fill="#777576" />
      <path d="M54 3c2 4 4 7 8 8l21 37H58q-4 0-4-4z" fill="#8b898a" />
      <path d="M60 10h23v38z" fill="#7a7879" />
      <path d="M22 13.500h30" stroke="#4d5c70" strokeWidth="1.500" />
      <g stroke="#4a484a" strokeWidth="1.300" strokeDasharray="5 .8 8 .8 3 .8">
        <path d="M9 19h21M9 21.500h21M9 28.500h21M9 31h12M35 45h20M9 53h30M9 55.500h46M9 58h54M18 60.500h12M9 66h10M9 70h24M9 72.500h40M9 75h26" />
        <path d="M9 84h72M9 86.500h74M14 89h67M14 91.500h42M9 97h54M9 100.500h70M9 103h36M9 108h20M9 111.500h42M9 114h28M9 116.500h8" />
      </g>
      <path d="M11 133l14-13v4l-12 12zM12 128l14-3M14 122l10 10" stroke="#5b5b7c" strokeWidth="1.500" fill="none" />
      <text x="43" y="131" textAnchor="middle" fontFamily="Inter, sans-serif" fontSize="18.500" fill="#333133">PDF</text>
    </svg>
  );
}

function Trash() {
  return (
    <svg className="mt-[-11px] ml-[5px] h-[140px] w-[108px]" viewBox="0 0 108 140">
      <defs>
        <linearGradient id="tr" x1="0" x2="1" y1="0" y2="0"><stop offset="0" stopColor="#7f8485" /><stop offset=".18" stopColor="#8a8f90" /><stop offset=".5" stopColor="#6c7173" /><stop offset=".8" stopColor="#55595b" /><stop offset="1" stopColor="#83888a" /></linearGradient>
        <radialGradient id="tl" cx=".5" cy="1" r=".45"><stop offset="0" stopColor="#c9cdcf" stopOpacity=".7" /><stop offset="1" stopColor="#c9cdcf" stopOpacity="0" /></radialGradient>
      </defs>
      <ellipse cx="54" cy="19" rx="53" ry="12" fill="#8b8f91" />
      <ellipse cx="54" cy="20" rx="50" ry="10" fill="#3d3f41" />
      <path d="M8 10l16-7 12-3 10 6 12 3 8-8 14 12 16 4-2 14-22 8H34l-22-9z" fill="#e4e4e3" />
      <path d="M10 12l10 12 6-16M36 0l4 16 12-8M66 1l-8 30M78 12l-6 18 20-12M14 28l16-8 8 12" fill="none" stroke="#8e8e90" strokeWidth="1.500" />
      <path d="M24 18c8-4 16 2 20 10l-14 3z" fill="#4b3430" />
      <path d="M34 14l14-2 4 6-12 4z" fill="#37a9e0" />
      <path d="M44 12l7 1 2 5-6-1z" fill="#6dbb3f" />
      <path d="M64 10l16 6-4 10-14-2z" fill="#3a4a8a" />
      <path d="M66 18l10 4-6 8-8-2z" fill="#c8552f" />
      <path d="M52 24l6 8-8-1z" fill="#d9893a" />
      <path d="M1 19c4 10 28 14 53 14s49-4 53-14l-14 103c-1 10-14 17-39 17s-38-7-39-17z" fill="url(#tr)" />
      <path d="M1 19c4 10 28 14 53 14s49-4 53-14l-14 103c-1 10-14 17-39 17s-38-7-39-17z" fill="url(#tl)" />
      <path d="M30 34c8 18 18 24 30 22 12-3 18-12 22-20-16 2-36 1-52-2z" fill="#a4a8a9" opacity=".6" />
      <path d="M1 19c4 10 28 14 53 14s49-4 53-14" fill="none" stroke="#b4b8b9" strokeWidth="1.500" />
    </svg>
  );
}

function Divider({ wide = false }: { wide?: boolean }) {
  return <i className={wide ? "mx-4 h-[132px] w-[2px] shrink-0 bg-[#875068]" : "mx-[15px] h-[132px] w-[2px] shrink-0 bg-[#8f5560]"} />;
}

function Dock() {
  return (
    <footer className="relative mx-[372px] mt-[2px] flex h-[180px] shrink-0 gap-[38px] rounded-[50px] border-2 border-white/20 bg-[linear-gradient(180deg,rgba(40,30,20,.25),rgba(0,0,0,0)_60%),linear-gradient(92deg,#181d26_0%,#1c1f28_8%,#361722_14%,#41172a_21%,#511c29_30%,#5c1f1e_38%,#501628_43%,#42182a_52%,#451829_62%,#531b3a_71%,#4b1a33_78%,#541b33_85%,#64201f_93%,#68221f_100%)] bg-origin-border pt-[22px] pl-[23px] shadow-[0_0_0_1px_rgba(0,0,0,.4),0_0_70px_rgba(0,0,0,.42)]">
      <Tile running><Finder /></Tile>
      <Tile><Launchpad /></Tile>
      <Tile><Safari /></Tile>
      <Tile><Maps /></Tile>
      <Tile badge="1"><Calendar /></Tile>
      <Tile><Reminders /></Tile>
      <Tile><Notes /></Tile>
      <Tile><AppStore /></Tile>
      <Tile badge="1"><Settings /></Tile>
      <Tile running><ChromeApp /></Tile>
      <Tile running><DBeaver /></Tile>
      <Tile running><VSCode /></Tile>
      <Divider wide />
      <Tile running><Terminal /></Tile>
      <Tile running><GitHubDesktop /></Tile>
      <Tile><Preview /></Tile>
      <Divider />
      <Tile><PdfStack /></Tile>
      <Tile><Trash /></Tile>
    </footer>
  );
}

export default function App() {
  return (
    <div className="relative isolate flex h-[2240px] w-[3584px] flex-col overflow-hidden bg-[linear-gradient(90deg,#02121e_0%,#02121e_20.600%,#28041c_20.700%,#34062c_30%,#4f174c_33.700%,#3a0e14_33.900%,#471b12_43.800%,#3f0a24_44%,#2e0620_57%,#4a1242_68%,#5a1a52_72%,#330828_73%,#4a1040_77%,#34092a_82%,#5f1c1a_90%,#7d2616_95%,#8c2c17_100%)]">
      <div className="absolute top-[2036px] left-[3510px] -z-10 h-[92px] w-[100px] rounded-bl-[10px] bg-[linear-gradient(180deg,#2d5f86_0%,#4a9bc8_45%,#5fb4e2_88%,#4593c6_92%,#58a9da_100%)]" />
      <div className="absolute top-[2158px] left-[3534px] z-10 w-[110px] font-[Inter,sans-serif] text-[24px] leading-[28px] font-semibold whitespace-nowrap text-white [text-shadow:0_2px_4px_rgba(0,0,0,.9)]">othe</div>
      <MenuBar />
      <div className="mt-[2px] flex h-[1998px] shrink-0 flex-col overflow-hidden rounded-[20px] border-t-2 border-[#6b6c6e] shadow-[0_0_0_2px_#000,0_20px_70px_rgba(0,0,0,.95)]">
        <TabStrip />
        <Toolbar />
        <SwaggerPage />
      </div>
      <Dock />
    </div>
  );
}
